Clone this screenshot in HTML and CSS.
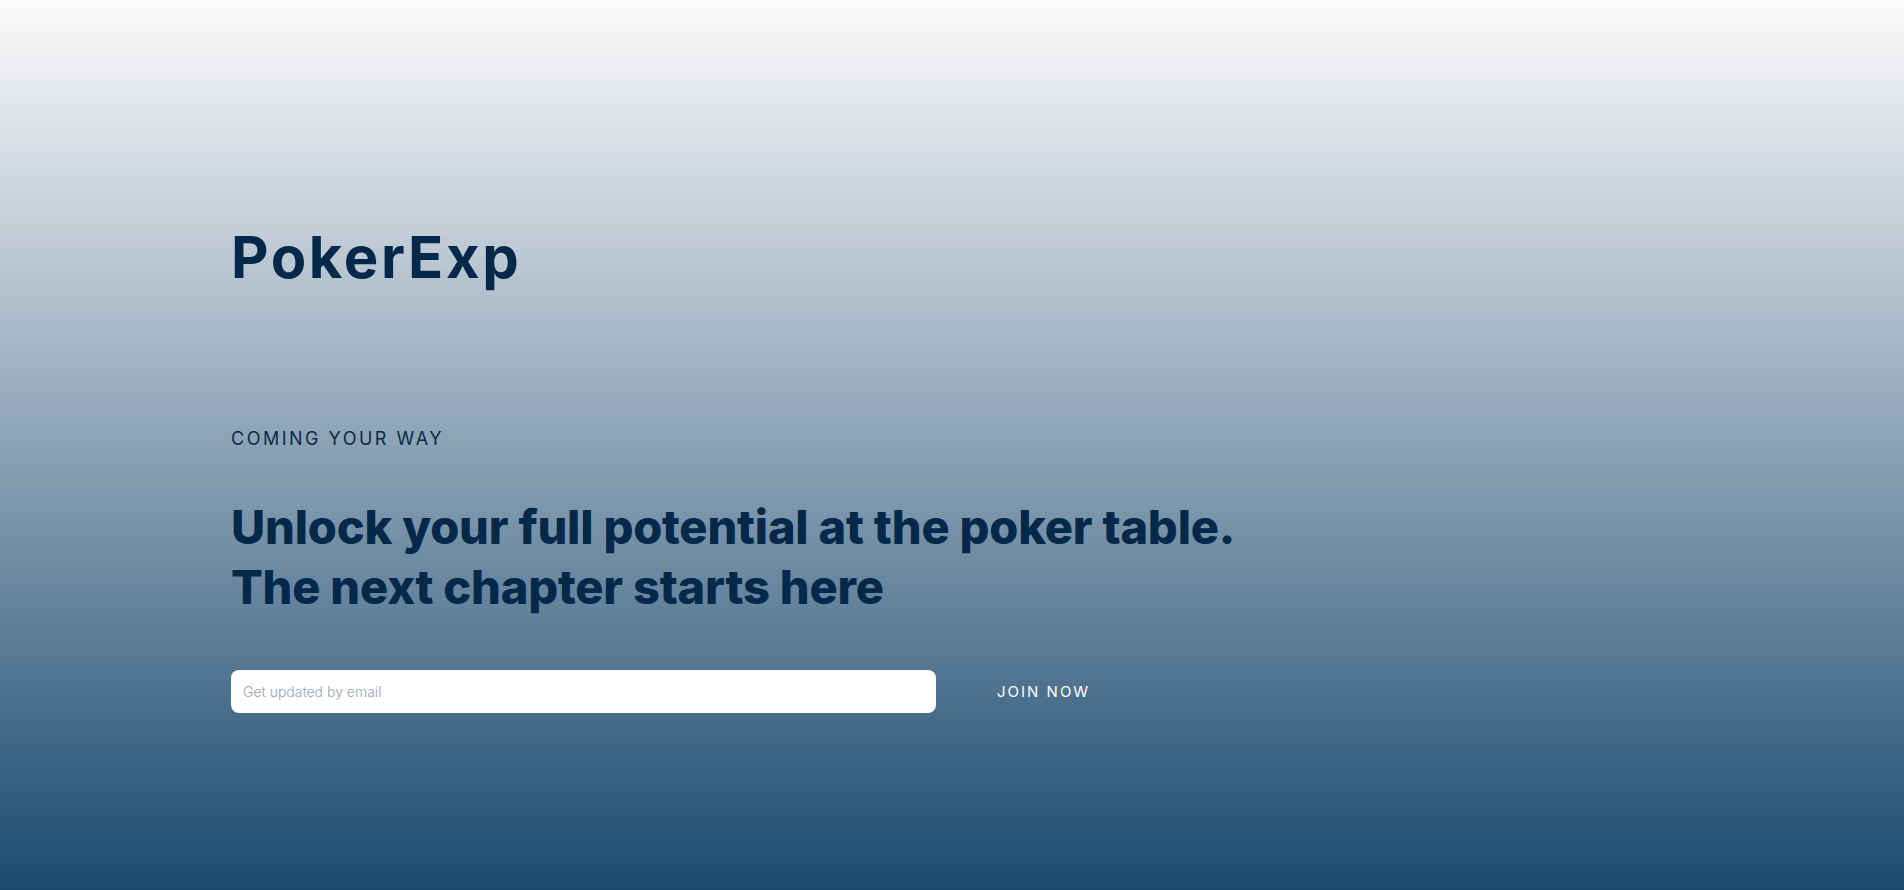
FILE: index.html
```html
<!DOCTYPE html>
<html lang="en">
<head>
<meta charset="utf-8">
<title>PokerExp</title>
<link rel="stylesheet" href="styles.css">
</head>
<body>
<main class="hero">
  <div class="logo">PokerExp</div>
  <p class="eyebrow">COMING YOUR WAY</p>
  <h1 class="headline">Unlock your full potential at the poker table.<br>The next chapter starts here</h1>
  <form class="signup">
    <input class="email" type="email" placeholder="Get updated by email">
    <button class="join" type="button">JOIN NOW</button>
  </form>
</main>
</body>
</html>
```
FILE: styles.css
```css
* { box-sizing: border-box; }
html, body { margin: 0; padding: 0; }
body {
  min-height: 100vh;
  background: linear-gradient(to bottom, #fdfbfb 0%, #1b4a6f 100%);
  font-family: Inter, "Noto Sans", sans-serif;
  color: #04284a;
}
.hero {
  display: flex;
  flex-direction: column;
  align-items: flex-start;
  padding: 228px 0 0 231px;
  height: 890px;
}
.logo {
  font-size: 58px;
  line-height: 58px;
  font-weight: 700;
  letter-spacing: 2.6px;
  color: #04284a;
}
.eyebrow {
  margin: 144px 0 0;
  font-size: 18px;
  line-height: 18px;
  font-weight: 400;
  letter-spacing: 2.5px;
  color: #0a2a4a;
}
.headline {
  margin: 49px 0 0;
  font-size: 47px;
  line-height: 60px;
  font-weight: 800;
  letter-spacing: -0.2px;
  color: #03284a;
}
.signup {
  display: flex;
  align-items: center;
  gap: 30px;
  margin-top: 53px;
}
.email {
  width: 705px;
  height: 43px;
  border: none;
  border-radius: 8px;
  background: #fff;
  padding: 0 12px;
  font-family: Inter, "Noto Sans", sans-serif;
  font-size: 14px;
  font-weight: 300;
  color: #333;
  outline: none;
}
.email::placeholder { color: #97a3b3; }
.join {
  background: transparent;
  border: none;
  padding: 0 31px;
  height: 43px;
  font-family: Inter, "Noto Sans", sans-serif;
  font-size: 15px;
  font-weight: 400;
  letter-spacing: 2px;
  color: #ffffff;
  cursor: pointer;
}
```
